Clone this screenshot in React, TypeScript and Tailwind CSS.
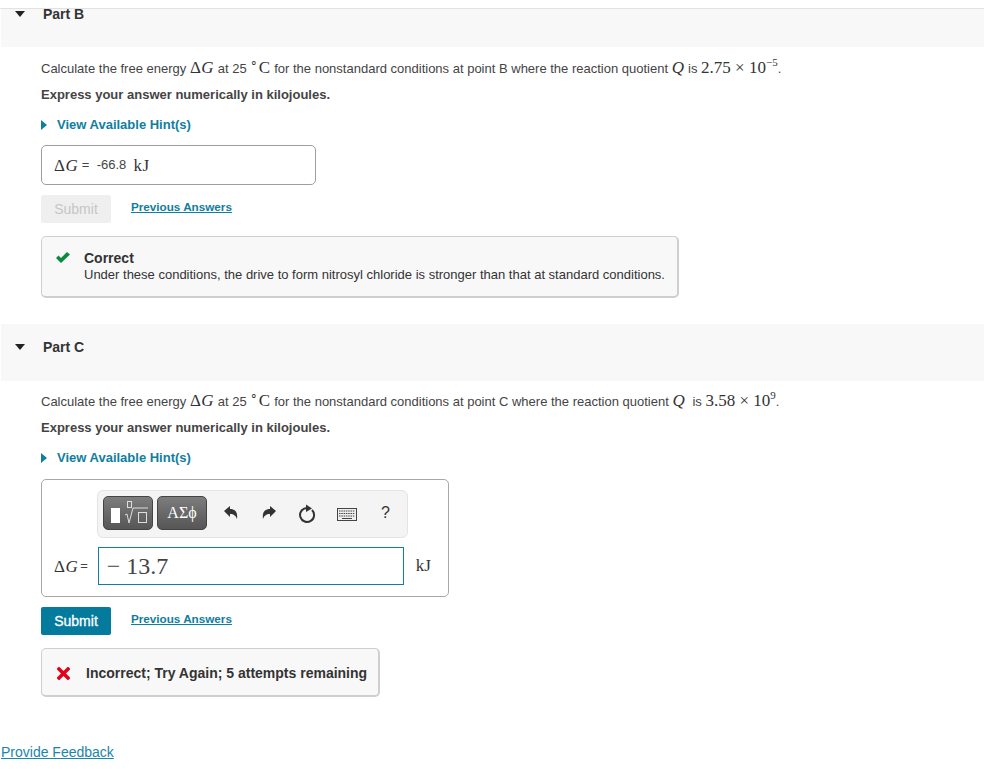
import React from "react";

const serif = "font-['Liberation_Serif',serif]";

function Caret() {
  return (
    <svg width="10" height="6" viewBox="0 0 10 6" className="shrink-0">
      <path d="M0 0h10L5 6z" fill="#222" />
    </svg>
  );
}

function PartHeader({ label, className }: { label: string; className: string }) {
  return (
    <div className={`flex ml-px bg-[#f8f8f8] ${className}`}>
      <div className="w-[14px]" />
      <Caret />
      <span className="ml-[18px] text-[14px] font-bold leading-4 text-[#333]">{label}</span>
    </div>
  );
}

function Hint() {
  return (
    <div className="flex items-center h-4 mt-[14px] text-[13px] font-bold text-[#0f7ea0]">
      <svg width="6" height="10" viewBox="0 0 6 10" className="mr-[10px]">
        <path d="M0 0l6 5-6 5z" fill="#0f7ea0" />
      </svg>
      View Available Hint(s)
    </div>
  );
}

function MathVar({ children }: { children: React.ReactNode }) {
  return <span className={`${serif} text-[17px] tracking-[0.5px] leading-none text-[#333]`}>{children}</span>;
}

function MathNum({ children }: { children: React.ReactNode }) {
  return <span className={`${serif} text-[17px] leading-none text-[#333]`}>{children}</span>;
}

function Toolbar() {
  return (
    <div className="flex items-center w-[311px] h-[48px] ml-[55px] pl-[5px] pb-[2px] bg-[#f4f4f4] border border-[#e4e4e4] rounded-md">
      <div className="relative w-[50px] h-[34px] rounded-[5px] border border-[#444] bg-gradient-to-b from-[#7d7d7d] to-[#565656]">
        <svg width="50" height="34" viewBox="0 0 50 34" fill="none" className="absolute -left-px -top-px">
          <rect x="8" y="12" width="9" height="15" fill="#fff" />
          <rect x="24.500" y="5.500" width="4" height="6" stroke="#ddd" />
          <path d="M22 19l2-1 2 9 4-15h15" stroke="#ddd" />
          <rect x="35.500" y="16.500" width="8" height="10" stroke="#ddd" />
        </svg>
      </div>
      <div className={`flex items-center justify-center w-[50px] h-[34px] ml-[4px] rounded-[5px] border border-[#444] bg-gradient-to-b from-[#7d7d7d] to-[#565656] text-[16px] text-white ${serif}`}>
        ΑΣϕ
      </div>
      <svg width="18" height="16" viewBox="0 0 18 16" className="ml-[15px]">
        <path d="M2 6l6-5v3c5 0 8 3 7 10-1-3-3-5-7-5v3z" fill="#333" />
      </svg>
      <svg width="18" height="16" viewBox="0 0 18 16" className="ml-[20px]">
        <path d="M16 6l-6-5v3C5 4 2 7 3 14c1-3 3-5 7-5v3z" fill="#333" />
      </svg>
      <svg width="20" height="20" viewBox="0 0 20 20" fill="none" className="ml-[19px] mt-[1px]">
        <path d="M9.500 4a7 7 0 1 0 5.500 2" stroke="#333" strokeWidth="2" />
        <path d="M9 0.500l6 4-6 3.500z" fill="#333" />
      </svg>
      <svg width="20" height="13" viewBox="0 0 20 13" fill="none" className="ml-[20px] mt-[3px]">
        <rect x="0.500" y="0.500" width="19" height="12" fill="#eee" stroke="#444" />
        <path d="M2 3h16M2 5.500h16M2 8h16" stroke="#444" strokeDasharray="1.500 0.800" />
        <path d="M5 10.500h10" stroke="#444" />
      </svg>
      <span className="ml-[24px] text-[16px] text-[#333] leading-none">?</span>
    </div>
  );
}

export default function App() {
  return (
    <div className="relative w-[984px] h-[769px] overflow-hidden bg-white pt-2 font-['Liberation_Sans',sans-serif]">
      <div className="border-t border-[#e2e2e2]" />
      <PartHeader label="Part B" className="h-[38px] items-start [&>svg]:mt-[2px] [&>span]:-mt-[3px]" />

      <div className="pl-[41px]">
        <p className="flex items-baseline h-[20px] mt-[12px] text-[13px] text-[#444] whitespace-pre">
          Calculate the free energy <MathVar>Δ<i>G</i></MathVar> at 25 <MathVar><sup className="text-[12px]">∘</sup>C</MathVar> for the nonstandard conditions at point B where the reaction quotient <MathVar><i>Q</i></MathVar> is <MathNum>2.75 × 10<sup className="text-[11px] -top-[7px]">−5</sup></MathNum>.
        </p>
        <p className="h-4 mt-[8px] text-[13px] font-bold leading-4 text-[#444]">Express your answer numerically in kilojoules.</p>
        <Hint />

        <div className="flex items-center w-[275px] h-[40px] mt-[12px] pl-3 border border-[#9e9e9e] rounded-[5px] whitespace-pre">
          <MathVar>Δ<i>G</i></MathVar>
          <span className="text-[13px] text-[#444]"> =  -66.8  </span>
          <MathVar>kJ</MathVar>
        </div>

        <div className="flex mt-[10px]">
          <div className="flex items-center justify-center w-[70px] h-[28px] rounded-[2px] bg-[#efefef] text-[14px] text-[#c6c6c6]">Submit</div>
          <span className="ml-5 mt-[4px] text-[11.700px] font-bold leading-4 text-[#0f7ea0] underline">Previous Answers</span>
        </div>

        <div className="flex w-[638px] h-[62px] mt-[13px] pl-[14px] pt-[13px] bg-[#f8f8f8] border border-[#cfcfcf] border-b-2 border-r-2 rounded-[5px]">
          <svg width="14" height="11" viewBox="0 0 14 11" className="mt-[2px] shrink-0">
            <path d="M0 6l2.500-2.500L5 6l6-6 3 2.500L5 11z" fill="#0a8a3e" />
          </svg>
          <div className="ml-[14px] text-[13px] leading-4 text-[#333]">
            <div className="text-[14px] font-bold">Correct</div>
            <div className="mt-px">Under these conditions, the drive to form nitrosyl chloride is stronger than that at standard conditions.</div>
          </div>
        </div>
      </div>

      <PartHeader label="Part C" className="h-[57px] mt-[26px] pt-[15px] items-start [&>svg]:mt-[5px]" />

      <div className="pl-[41px]">
        <p className="flex items-baseline h-[20px] mt-[11px] text-[13px] text-[#444] whitespace-pre">
          Calculate the free energy <MathVar>Δ<i>G</i></MathVar> at 25 <MathVar><sup className="text-[12px]">∘</sup>C</MathVar> for the nonstandard conditions at point C where the reaction quotient <MathVar><i>Q</i></MathVar>  is <MathNum>3.58 × 10<sup className="text-[11px] -top-[7px]">9</sup></MathNum>.
        </p>
        <p className="h-4 mt-[8px] text-[13px] font-bold leading-4 text-[#444]">Express your answer numerically in kilojoules.</p>
        <Hint />

        <div className="w-[408px] h-[118px] mt-[13px] pt-[10px] border border-[#a8a8a8] rounded-[5px]">
          <Toolbar />
          <div className="flex items-center mt-[9px] pl-3">
            <MathVar>Δ<i>G</i></MathVar>
            <span className="ml-[2px] text-[13px] text-[#444]">=</span>
            <div className={`flex items-center w-[306px] h-[38px] ml-[10px] pl-2 border border-[#0f7ea0] text-[24px] text-[#444] whitespace-pre ${serif}`}>
              − 13.7
            </div>
            <span className={`ml-[12px] text-[17px] text-[#333] ${serif}`}>kJ</span>
          </div>
        </div>

        <div className="flex mt-[10px]">
          <div className="flex items-center justify-center w-[70px] h-[28px] rounded-[2px] bg-[#047a9c] text-[14px] text-white [-webkit-text-stroke:0.3px_white]">Submit</div>
          <span className="ml-5 mt-[4px] text-[11.700px] font-bold leading-4 text-[#0f7ea0] underline">Previous Answers</span>
        </div>

        <div className="flex items-center w-[339px] h-[49px] mt-[13px] pl-[15px] pt-[2px] bg-[#f8f8f8] border border-[#cfcfcf] border-b-2 border-r-2 rounded-[5px]">
          <svg width="13" height="13" viewBox="0 0 13 13" className="shrink-0">
            <path d="M2 2l9 9M11 2l-9 9" stroke="#e2001a" strokeWidth="3.500" strokeLinecap="square" />
          </svg>
          <span className="ml-[16px] text-[14px] font-bold text-[#333] whitespace-nowrap">Incorrect; Try Again; 5 attempts remaining</span>
        </div>
      </div>

      <a className="absolute left-px top-[744px] text-[14px] leading-4 text-[#1a86a8] underline">Provide Feedback</a>
    </div>
  );
}
